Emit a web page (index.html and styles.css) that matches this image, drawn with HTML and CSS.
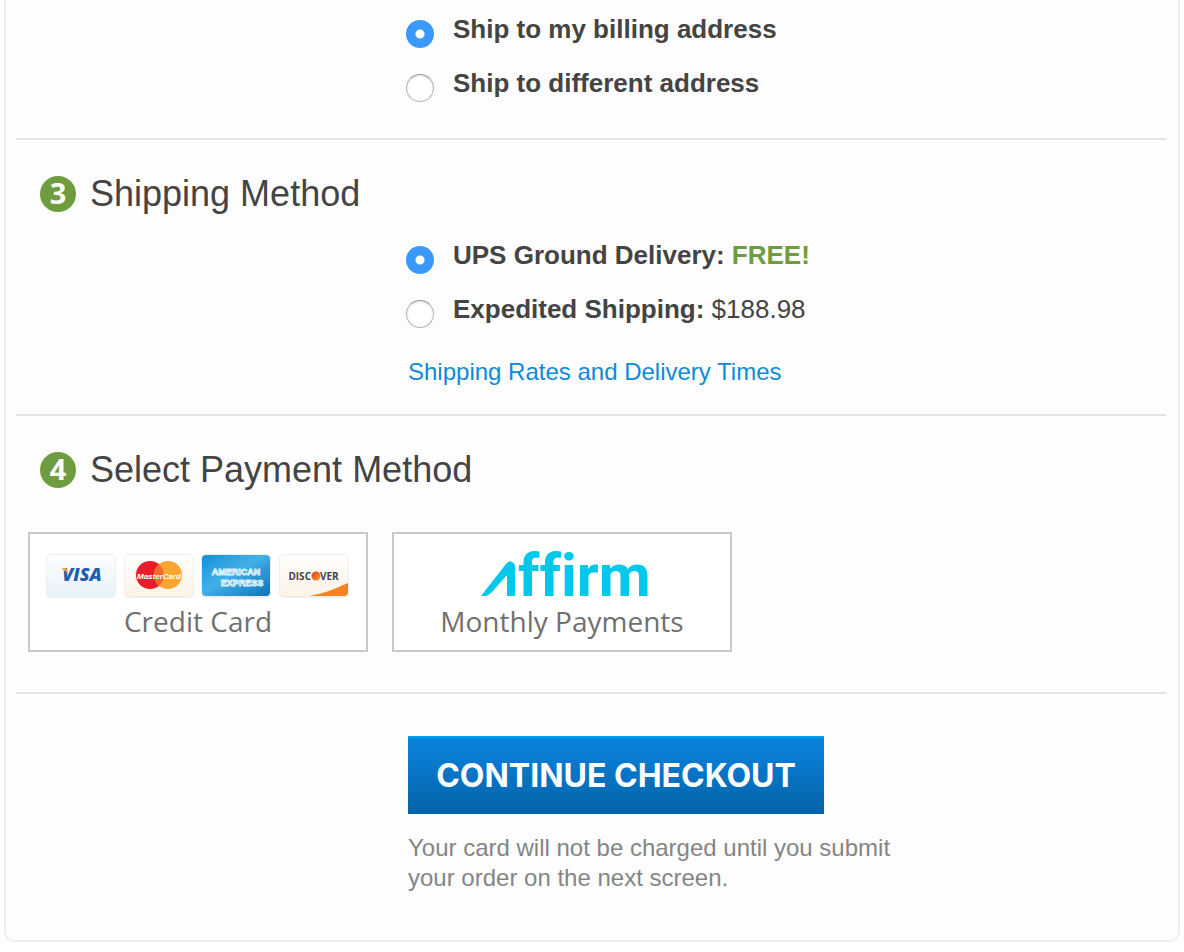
FILE: index.html
```html
<!DOCTYPE html>
<html lang="en">
<head>
<meta charset="utf-8">
<title>Checkout</title>
<link rel="stylesheet" href="styles.css">
</head>
<body>
<form class="panel">
  <section class="step step-address">
    <div class="options">
      <div class="option">
        <input class="radio" type="radio" name="address" id="billing" checked>
        <label for="billing">Ship to my billing address</label>
      </div>
      <div class="option">
        <input class="radio" type="radio" name="address" id="different">
        <label for="different">Ship to different address</label>
      </div>
    </div>
  </section>

  <section class="step step-shipping">
    <h2 class="heading"><span class="badge">3</span>Shipping Method</h2>
    <div class="options">
      <div class="option">
        <input class="radio" type="radio" name="shipping" id="ground" checked>
        <label for="ground">UPS Ground Delivery: <span class="free">FREE!</span></label>
      </div>
      <div class="option">
        <input class="radio" type="radio" name="shipping" id="expedited">
        <label for="expedited">Expedited Shipping: <span class="price">$188.98</span></label>
      </div>
    </div>
    <div class="indent rates"><a class="link" href="#">Shipping Rates and Delivery Times</a></div>
  </section>

  <section class="step step-payment">
    <h2 class="heading"><span class="badge">4</span>Select Payment Method</h2>
    <div class="methods">
      <button class="method" type="button">
        <svg class="cards" width="306" height="46" viewBox="0 0 306 46" aria-hidden="true">
          <defs>
            <linearGradient id="visa" x1="0" y1="0" x2="0" y2="1"><stop offset="0" stop-color="#fdfeff"/><stop offset="1" stop-color="#e8f2f9"/></linearGradient>
            <linearGradient id="warm" x1="0" y1="0" x2="0" y2="1"><stop offset="0" stop-color="#fffefd"/><stop offset="1" stop-color="#fdf2e6"/></linearGradient>
            <linearGradient id="amex" x1="0" y1="0" x2="1" y2="1"><stop offset="0" stop-color="#1191da"/><stop offset=".45" stop-color="#43b0e7"/><stop offset="1" stop-color="#0874bc"/></linearGradient>
            <linearGradient id="sun" x1="0" y1="0" x2="1" y2="1"><stop offset="0" stop-color="#dd3b2c"/><stop offset="1" stop-color="#f9a11f"/></linearGradient>
            <clipPath id="discover"><rect x="235" y="2" width="68" height="41" rx="4"/></clipPath>
          </defs>
          <g fill="#eceff1"><rect x="1" y="1" width="70" height="44" rx="5"/><rect x="79" y="1" width="70" height="44" rx="5"/><rect x="156" y="1" width="70" height="44" rx="5"/><rect x="234" y="1" width="70" height="44" rx="5"/></g>
          <rect x="2" y="2" width="68" height="41" rx="4" fill="url(#visa)"/>
          <text class="visa" x="37" y="28" text-anchor="middle">VISA</text>
          <path d="M16 15h5l3 7c-2-3-5-5-8-7z" fill="#f2a93b"/>
          <rect x="80" y="2" width="68" height="41" rx="4" fill="url(#warm)"/>
          <circle cx="105" cy="22" r="14" fill="#eb1c2a"/>
          <circle cx="123" cy="22" r="14" fill="#faa630"/>
          <path d="M114 11.300a14 14 0 0 1 0 21.400a14 14 0 0 1 0-21.400z" fill="#f1692b"/>
          <text class="mastercard" x="114" y="26" text-anchor="middle">MasterCard</text>
          <rect x="157" y="2" width="68" height="41" rx="4" fill="url(#amex)"/>
          <g class="amex"><text x="191" y="22" text-anchor="middle">AMERICAN</text><text x="197" y="33" text-anchor="middle">EXPRESS</text></g>
          <rect x="235" y="2" width="68" height="41" rx="4" fill="url(#warm)"/>
          <path d="M264 43C281 40 292 35 303 30v13z" fill="#f58220" clip-path="url(#discover)"/>
          <text class="discover" x="266" y="27" text-anchor="end">DISC</text>
          <circle cx="271" cy="23" r="4.500" fill="url(#sun)"/>
          <text class="discover" x="275" y="27">VER</text>
        </svg>
        <span class="method-name">Credit Card</span>
      </button>
      <button class="method" type="button">
        <svg class="affirm" width="168" height="52" viewBox="0 0 168 52" role="img" aria-label="Affirm">
          <path d="M3 50L28 18Q31 14 34 16Q37 17 37 21V50H29V29L14 46Q10 50 7 50Z"/>
          <text x="40" y="50">ffirm</text>
        </svg>
        <span class="method-name">Monthly Payments</span>
      </button>
    </div>
  </section>

  <section class="indent submit">
    <button class="continue" type="submit">CONTINUE CHECKOUT</button>
    <p class="note">Your card will not be charged until you submit your order on the next screen.</p>
  </section>
</form>
</body>
</html>
```
FILE: styles.css
```css
* { box-sizing: border-box; }

body {
  margin: 0;
  background: #fff;
  color: #444;
  font-family: "Liberation Sans", Arial, sans-serif;
}

.panel {
  margin: 0 4px 10px;
  padding: 0 12px 0 10px;
  background: #fdfdfd;
  border: 2px solid #eee;
  border-top: 0;
  border-radius: 0 0 10px 10px;
}

.step { border-bottom: 2px solid #e4e4e4; }
.step-address { padding: 14px 0 36px; }
.step-shipping { padding: 36px 0 27px; }
.step-payment { padding: 36px 0 40px; }

.heading {
  display: flex;
  align-items: center;
  gap: 14px;
  margin: 0;
  padding-left: 24px;
  font-size: 36px;
  font-weight: 400;
  line-height: 36px;
}

.badge {
  width: 36px;
  height: 36px;
  border-radius: 50%;
  background: #6f9c3f;
  color: #fff;
  font-family: "Open Sans", sans-serif;
  font-size: 29px;
  font-weight: 700;
  line-height: 34px;
  text-align: center;
}

.options {
  display: flex;
  flex-direction: column;
  gap: 20px;
  padding-left: 390px;
}

.heading + .options { margin-top: 28px; }

.option {
  display: flex;
  align-items: flex-start;
  gap: 19px;
  font-size: 26px;
  font-weight: 700;
  line-height: 30px;
}

.radio {
  appearance: none;
  flex: none;
  width: 28px;
  height: 28px;
  margin: 6px 0 0;
  border: 1px solid #b4b4b4;
  border-top-color: #999;
  border-radius: 50%;
  background: #fff;
  box-shadow: inset 0 1px 2px #ddd;
}

.radio:checked {
  border: 0;
  background: radial-gradient(circle, #fff 4px, #3b99fc 5px);
  box-shadow: none;
}

.free { color: #6f9c3f; }
.price { font-weight: 400; }

.indent { padding-left: 392px; }

.rates {
  margin-top: 29px;
  font-size: 24px;
  line-height: 30px;
}

.link { color: #0d8bd9; text-decoration: none; }

.methods {
  display: flex;
  flex-wrap: wrap;
  gap: 24px;
  margin-top: 44px;
  padding-left: 12px;
}

.method {
  display: flex;
  flex-direction: column;
  align-items: center;
  justify-content: flex-end;
  width: 340px;
  height: 120px;
  padding: 0 0 12px;
  border: 2px solid #c8c8c8;
  background: #fff;
  color: #707070;
  font-family: "Open Sans", sans-serif;
  font-size: 28px;
  font-weight: 500;
  line-height: 34px;
}

.cards { margin-bottom: 5px; }
.affirm { margin-bottom: 6px; overflow: visible; fill: #00c8ea; }

.affirm text {
  font: 700 60px Roboto, sans-serif;
  font-variant-ligatures: none;
}
.visa { font: italic 800 18px "Open Sans", sans-serif; fill: #1f5fae; }
.mastercard { font: italic 700 8px "Liberation Sans", sans-serif; fill: #fff; }
.amex { font: 700 9px "Liberation Sans", sans-serif; fill: #4fb0e4; stroke: #d9effa; stroke-width: 1px; }
.discover { font: 700 10px "Open Sans", sans-serif; fill: #444; }

.submit { padding-top: 42px; padding-bottom: 47px; }

.continue {
  width: 416px;
  height: 78px;
  padding: 0 0 2px;
  border: 0;
  border-top: 2px solid #009ee9;
  background: linear-gradient(#0a84df, #0462a8);
  color: #fff;
  font-family: Inter, sans-serif;
  font-size: 32px;
  font-weight: 700;
}

.note {
  max-width: 500px;
  margin: 19px 0 0;
  color: #858585;
  font-size: 24px;
  line-height: 30px;
}
```
